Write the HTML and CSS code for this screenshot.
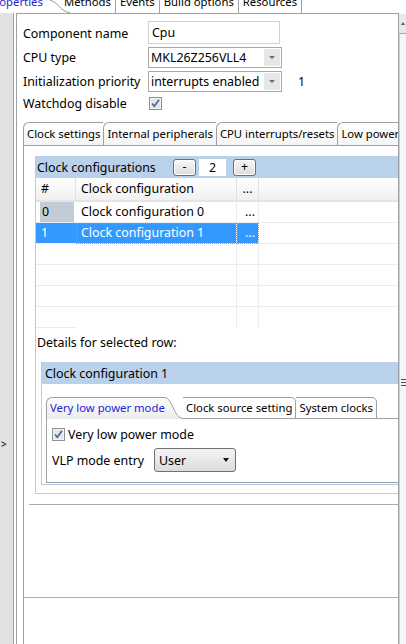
FILE: index.html
```html
<!DOCTYPE html>
<html lang="en">
<head>
<meta charset="UTF-8">
<meta name="viewport" content="width=device-width, initial-scale=1.0">
<title>Component Inspector - Cpu</title>
<link rel="stylesheet" href="styles.css">
</head>
<body>
    <div class="view-tabs">
        <div class="view-tab view-tab-active">Properties</div>
        <svg class="view-tab-curve" width="20" height="13" viewBox="0 0 20 13">
            <path d="M0 0.5 C7 0.5 11 12.5 20 12.5" fill="none" stroke="#9a9a9a"/>
        </svg>
        <div class="view-tab">Methods</div>
        <div class="view-tab">Events</div>
        <div class="view-tab">Build options</div>
        <div class="view-tab">Resources</div>
    </div>

    <div class="main">
        <div class="side"><span class="side-arrow">&gt;</span></div>

        <div class="editor">
            <div class="prop-row">
                <div class="prop-label">Component name</div>
                <div class="text-field">Cpu</div>
            </div>
            <div class="prop-row">
                <div class="prop-label">CPU type</div>
                <div class="combo">
                    <span class="combo-value">MKL26Z256VLL4</span>
                    <span class="combo-btn"><i class="combo-arrow"></i></span>
                </div>
            </div>
            <div class="prop-row">
                <div class="prop-label">Initialization priority</div>
                <div class="combo">
                    <span class="combo-value">interrupts enabled</span>
                    <span class="combo-btn"><i class="combo-arrow"></i></span>
                </div>
                <span class="prop-note">1</span>
            </div>
            <div class="prop-row prop-row-check">
                <div class="prop-label">Watchdog disable</div>
                <svg class="check" width="13" height="13" viewBox="0 0 13 13">
                    <rect x="0.5" y="0.5" width="12" height="12" fill="#f3f3f3" stroke="#8e8f8f"/>
                    <rect x="2" y="2" width="9" height="9" fill="#e2e5ea"/>
                    <path d="M3 6.5 L5.3 9.3 L10 2.8" fill="none" stroke="#4b5f95" stroke-width="1.6"/>
                </svg>
            </div>

            <div class="settings">
                <div class="settings-tabs">
                    <div class="settings-tab">Clock settings</div>
                    <div class="settings-tab">Internal peripherals</div>
                    <div class="settings-tab">CPU interrupts/resets</div>
                    <div class="settings-tab">Low power modes</div>
                </div>

                <div class="settings-panel">
                    <div class="group">
                        <div class="group-head">
                            <span class="head-title">Clock configurations</span>
                            <span class="spin-btn">-</span>
                            <span class="spin-value">2</span>
                            <span class="spin-btn">+</span>
                        </div>

                        <div class="grid-table">
                            <div class="th">#</div>
                            <div class="th">Clock configuration</div>
                            <div class="th th-dots">...</div>
                            <div class="th th-last"></div>

                            <div class="td td-num"><span class="num-block">0</span></div>
                            <div class="td td-col">Clock configuration 0</div>
                            <div class="td td-col td-dots">...</div>
                            <div class="td"></div>

                            <div class="td sel">1</div>
                            <div class="td td-col sel sel-focus">Clock configuration 1</div>
                            <div class="td td-col td-dots sel sel-focus">...</div>
                            <div class="td"></div>

                            <div class="td"></div><div class="td td-col"></div><div class="td td-col"></div><div class="td"></div>
                            <div class="td"></div><div class="td td-col"></div><div class="td td-col"></div><div class="td"></div>
                            <div class="td"></div><div class="td td-col"></div><div class="td td-col"></div><div class="td"></div>
                            <div class="td"></div><div class="td td-col td-end"></div><div class="td td-col td-end"></div><div class="td td-end"></div>
                        </div>

                        <div class="details-label">Details for selected row:</div>

                        <div class="group group-inner">
                            <div class="group-head">
                                <span>Clock configuration 1</span>
                            </div>
                            <div class="group-body">
                                <div class="sub-tabs">
                                    <div class="sub-tab-active">Very low power mode</div>
                                    <svg class="sub-tab-curve" width="18" height="22" viewBox="0 0 18 22">
                                        <defs>
                                            <linearGradient id="tabfill" x1="0" y1="0" x2="0" y2="1">
                                                <stop offset="0" stop-color="#fcfcfc"/>
                                                <stop offset="1" stop-color="#ececec"/>
                                            </linearGradient>
                                        </defs>
                                        <path d="M0 0.5 C7 0.5 9 21.5 18 21.5 L18 22 L0 22 Z" fill="url(#tabfill)"/>
                                        <path d="M0 0.5 C7 0.5 9 21.5 18 21.5" fill="none" stroke="#a0a0a0"/>
                                    </svg>
                                    <div class="sub-tab">Clock source setting</div>
                                    <div class="sub-tab">System clocks</div>
                                    <div class="sub-tab-fill"></div>
                                </div>
                                <div class="sub-panel">
                                    <div class="sub-row">
                                        <svg class="check check-gap" width="13" height="13" viewBox="0 0 13 13">
                                            <rect x="0.5" y="0.5" width="12" height="12" fill="#f3f3f3" stroke="#8e8f8f"/>
                                            <rect x="2" y="2" width="9" height="9" fill="#e2e5ea"/>
                                            <path d="M3 6.5 L5.3 9.3 L10 2.8" fill="none" stroke="#4b5f95" stroke-width="1.6"/>
                                        </svg>
                                        <span>Very low power mode</span>
                                    </div>
                                    <div class="sub-row sub-row-select">
                                        <span class="sub-label">VLP mode entry</span>
                                        <div class="dropdown">
                                            <span>User</span>
                                            <i class="dropdown-arrow"></i>
                                        </div>
                                    </div>
                                </div>
                            </div>
                        </div>
                    </div>

                    <div class="rule rule-short"></div>
                    <div class="rule rule-long"></div>
                </div>
            </div>
        </div>

        <div class="vscroll">
            <div class="sb-up"><i class="sb-up-arrow"></i></div>
            <div class="sb-thumb"><div class="sb-grip"></div></div>
        </div>
    </div>
</body>
</html>
```

FILE: styles.css
```css
* {
    box-sizing: border-box;
}

body {
    margin: 0;
    width: 406px;
    height: 644px;
    overflow: hidden;
    background: #fff;
    color: #000;
    font-family: "Noto Sans", "DejaVu Sans", sans-serif;
    font-size: 12.4px;
    display: flex;
    flex-direction: column;
}

/* view tabs along the top, mostly scrolled out of sight */
.view-tabs {
    height: 13px;
    display: flex;
    overflow: hidden;
    flex-shrink: 0;
    font-size: 11.3px;
}

.view-tab {
    height: 19px;
    margin-top: -6px;
    padding: 0 4px;
    line-height: 16px;
    white-space: nowrap;
    border-right: 1px solid #a0a0a0;
}

.view-tab-active {
    width: 50px;
    padding: 0;
    overflow: hidden;
    text-indent: -12px;
    color: #1f1fd8;
    border-right: none;
}

.view-tab-curve {
    flex-shrink: 0;
    margin-right: -10px;
}

.main {
    flex: 1;
    display: flex;
    min-height: 0;
}

.side {
    width: 14px;
    flex-shrink: 0;
    background: #e1e1e1;
    border-right: 1px solid #a0a0a0;
    padding: 426px 0 0 1px;
    font-size: 10px;
    line-height: 10px;
}

.editor {
    flex: 1;
    min-width: 0;
    margin-left: 2px;
    border: 1px solid #a0a0a0;
    border-bottom: none;
    padding: 7px 0 0 6px;
    overflow: hidden;
    display: flex;
    flex-direction: column;
}

/* component properties */
.prop-row {
    height: 24px;
    display: flex;
    align-items: center;
    flex-shrink: 0;
}

.prop-row-check {
    height: 20px;
}

.prop-label {
    width: 125px;
    flex-shrink: 0;
    white-space: nowrap;
}

.text-field {
    align-self: flex-start;
    width: 132px;
    height: 23px;
    padding: 0 3px;
    line-height: 21px;
    border: 1px solid #c9d3de;
}

.combo {
    width: 134px;
    height: 21px;
    display: flex;
    border: 1px solid #a9a9a9;
}

.combo-value {
    flex: 1;
    padding-left: 2px;
    line-height: 19px;
    white-space: nowrap;
    overflow: hidden;
}

.combo-btn {
    width: 16px;
    margin: 1px 1px 1px 0;
    background: #e6e6e6;
    display: flex;
    align-items: center;
    justify-content: center;
}

.combo-arrow {
    width: 0;
    height: 0;
    border-left: 3px solid transparent;
    border-right: 3px solid transparent;
    border-top: 3px solid #6e6e6e;
}

.prop-note {
    margin-left: 16px;
}

.check {
    display: block;
    flex-shrink: 0;
    margin-left: 1px;
}

/* clock settings tab folder */
.settings {
    flex: 1;
    margin-top: 9px;
    display: flex;
    flex-direction: column;
    min-height: 0;
}

.settings-tabs {
    height: 24px;
    display: flex;
    flex-shrink: 0;
    border-bottom: 1px solid #a0a0a0;
    font-size: 11.3px;
}

.settings-tab {
    padding: 0 3px;
    line-height: 22px;
    white-space: nowrap;
    border-top: 1px solid #a0a0a0;
    border-left: 1px solid #a0a0a0;
    border-top-left-radius: 6px;
    background: linear-gradient(#fff, #f5f5f5);
}

.settings-panel {
    flex: 1;
    border-left: 1px solid #a0a0a0;
    padding: 10px 0 0 11px;
    display: flex;
    flex-direction: column;
}

.group {
    width: 400px;
    flex-shrink: 0;
    border: 1px solid #b4cce6;
    border-top: none;
    padding-bottom: 8px;
}

.group-head {
    height: 22px;
    display: flex;
    align-items: center;
    padding-left: 1px;
    background: #b9d1ea;
    white-space: nowrap;
}

.head-title {
    width: 136px;
}

.spin-btn {
    width: 23px;
    height: 17px;
    border: 1px solid #6f6f6f;
    border-radius: 3px;
    background: linear-gradient(#f7f7f7, #dcdcdc);
    box-shadow: inset 0 0 0 1px #fff;
    text-align: center;
    line-height: 14px;
}

.spin-value {
    width: 27px;
    height: 17px;
    margin: 0 7px 0 3px;
    background: #fff;
    text-align: center;
    line-height: 17px;
}

/* configurations table */
.grid-table {
    display: grid;
    grid-template-columns: 40px 161px 22px 1fr;
}

.th {
    height: 24px;
    padding-left: 5px;
    line-height: 21px;
    white-space: nowrap;
    background: linear-gradient(#fff, #f0f0f0);
    border-right: 1px solid #e2e2e2;
    border-bottom: 2px solid #e4e4e4;
}

.th-dots,
.td-dots {
    padding-left: 0;
    text-align: center;
}

.th-last {
    border-right: none;
}

.td {
    height: 21px;
    padding-left: 5px;
    line-height: 20px;
    white-space: nowrap;
    border-bottom: 1px solid #ececec;
}

.td-col {
    border-right: 1px solid #ececec;
}

.td-num {
    padding-left: 4px;
}

.num-block {
    display: block;
    width: 34px;
    height: 20px;
    padding-left: 2px;
    background: #c2ccd9;
}

.td-end {
    border-bottom-color: transparent;
}

.sel {
    background: #3399ff;
    color: #fff;
}

.sel-focus {
    outline: 1px dotted #f08a1c;
    outline-offset: -1px;
    border-right-color: #fff;
}

.details-label {
    margin-top: 7px;
    padding-left: 1px;
    line-height: 16px;
}

.group-inner {
    margin: 11px 0 0 5px;
    padding-bottom: 0;
}

.group-inner .group-head {
    padding-left: 3px;
}

.group-body {
    padding: 13px 0 1px 4px;
}

.sub-tabs {
    height: 22px;
    display: flex;
    font-size: 11.3px;
}

.sub-tab-active {
    width: 119px;
    padding-left: 3px;
    line-height: 20px;
    color: #2424d8;
    white-space: nowrap;
    border-top: 1px solid #a0a0a0;
    border-left: 1px solid #a0a0a0;
    border-top-left-radius: 6px;
    background: linear-gradient(#fcfcfc, #ececec);
}

.sub-tab-curve {
    display: block;
    flex-shrink: 0;
}

.sub-tab {
    padding: 0 3px;
    line-height: 20px;
    white-space: nowrap;
    border: 1px solid #a0a0a0;
    border-left: none;
    border-top-right-radius: 5px;
}

.sub-tab-fill {
    flex: 1;
    border-bottom: 1px solid #a0a0a0;
}

.sub-panel {
    border-left: 1px solid #a0a0a0;
    border-bottom: 1px solid #a0a0a0;
    padding: 4px 0 10px 5px;
}

.sub-row {
    height: 22px;
    display: flex;
    align-items: center;
}

.check-gap {
    margin: 0 3px 0 0;
}

.sub-row-select {
    height: 24px;
    margin-top: 3px;
}

.sub-label {
    width: 102px;
}

.dropdown {
    width: 82px;
    height: 24px;
    display: flex;
    align-items: center;
    justify-content: space-between;
    padding: 0 6px 0 4px;
    border: 1px solid #707070;
    border-radius: 3px;
    background: linear-gradient(#f4f4f4, #dcdcdc);
}

.dropdown-arrow {
    width: 0;
    height: 0;
    border-left: 3.5px solid transparent;
    border-right: 3.5px solid transparent;
    border-top: 4px solid #111;
}

.rule {
    height: 1px;
    width: 400px;
    flex-shrink: 0;
    background: #acacac;
}

.rule-short {
    margin: 10px 0 0 -6px;
}

.rule-long {
    margin: 92px 0 0 -11px;
}

/* scrollbar sliver at the right edge */
.vscroll {
    width: 7px;
    flex-shrink: 0;
    margin-top: 1px;
    background: #e9e9e9;
    display: flex;
    flex-direction: column;
}

.sb-up {
    height: 19px;
    display: flex;
    align-items: center;
    justify-content: center;
}

.sb-up-arrow {
    width: 0;
    height: 0;
    border-left: 2.5px solid transparent;
    border-right: 2.5px solid transparent;
    border-bottom: 3px solid #5a5a5a;
}

.sb-thumb {
    flex: 1;
    border-top: 1px solid #a8a8a8;
    border-left: 1px solid #cfcfcf;
    background: #f6f6f6;
    padding-top: 345px;
}

.sb-grip {
    width: 5px;
    height: 7px;
    margin-left: 1px;
    background: repeating-linear-gradient(#4f4f4f 0 1px, transparent 1px 3px);
}
```
